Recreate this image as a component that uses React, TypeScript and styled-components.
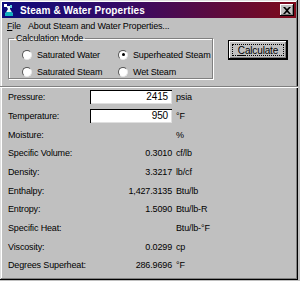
import { Fragment } from "react";
import styled, { createGlobalStyle } from "styled-components";

const GlobalStyle = createGlobalStyle`
  html, body {
    margin: 0;
    padding: 0;
    background: #c0c0c0;
  }
  body {
    font-family: "Liberation Sans", Arial, sans-serif;
    font-size: 9px;
    letter-spacing: -0.15px;
    color: #000;
  }
`;

const Window = styled.div`
  width: 298px;
  height: 280px;
  box-sizing: border-box;
  padding: 2px;
  background: #c0c0c0;
  box-shadow: inset -1px -1px #000, inset 1px 1px #dfdfdf,
    inset -2px -2px #808080, inset 2px 2px #fff;
  display: flex;
  flex-direction: column;
  white-space: nowrap;
`;

const TitleBar = styled.div`
  height: 16px;
  display: flex;
  align-items: center;
  gap: 5px;
  padding: 0 2px 0 1px;
  background: linear-gradient(to right, #0c0a7c, #3a0a62 45%, #7e0a1a);
  color: #fff;
  font-weight: bold;
  font-size: 10px;
  letter-spacing: 0.1px;
`;

const TitleText = styled.span`
  flex: 1;
`;

const CloseButton = styled.div`
  width: 14px;
  height: 12px;
  box-sizing: border-box;
  background: #c0c0c0;
  box-shadow: inset -1px -1px #000, inset 1px 1px #fff, inset -2px -2px #808080;
  display: flex;
  align-items: center;
  justify-content: center;
`;

const MenuBar = styled.div`
  height: 13px;
  display: flex;
  align-items: center;
  padding: 1px 0 0 5px;
  gap: 7px;
`;

const MenuItem = styled.span``;

const TopSection = styled.div`
  display: flex;
  align-items: flex-start;
  padding: 0 0 0 6px;
  height: 54px;
`;

const GroupBox = styled.fieldset`
  margin: 1px 0 0 0;
  padding: 0;
  width: 205px;
  height: 46px;
  box-sizing: border-box;
  border: 1px solid #808080;
  box-shadow: 1px 1px 0 #fff, inset 1px 1px 0 #fff;
`;

const GroupLegend = styled.legend`
  margin-left: 5px;
  padding: 0 2px;
  font-size: 9px;
`;

const RadioGrid = styled.div`
  display: grid;
  grid-template-columns: 96px 1fr;
  grid-auto-rows: 17px;
  padding: 3px 0 0 13px;
`;

const RadioOption = styled.label`
  display: flex;
  align-items: center;
  gap: 5px;
`;

const RadioCircle = styled.span<{ $checked?: boolean }>`
  width: 10px;
  height: 10px;
  box-sizing: border-box;
  border-radius: 50%;
  background: #fff;
  border: 1px solid;
  border-color: #555 #e8e8e8 #e8e8e8 #555;
  display: flex;
  align-items: center;
  justify-content: center;
  &::after {
    content: "";
    width: 3px;
    height: 3px;
    border-radius: 50%;
    background: ${(p) => (p.$checked ? "#000" : "transparent")};
  }
`;

const CalcButton = styled.div`
  margin: 8px 0 0 15px;
  width: 60px;
  height: 20px;
  box-sizing: border-box;
  border: 1px solid #000;
  background: #c0c0c0;
  box-shadow: inset -1px -1px #000, inset 1px 1px #fff, inset -2px -2px #808080;
  display: flex;
  padding: 3px;
`;

const FocusRect = styled.span`
  flex: 1;
  border: 1px dotted #000;
  display: flex;
  align-items: center;
  justify-content: center;
  font-size: 10px;
`;

const Separator = styled.div`
  height: 0;
  border-top: 1px solid #808080;
  border-bottom: 1px solid #fff;
  margin: 0 -2px;
`;

const Fields = styled.div`
  display: grid;
  grid-template-columns: 78px 82px auto;
  grid-auto-rows: 18.67px;
  column-gap: 4px;
  align-items: center;
  padding: 0 0 0 6px;
`;

const Label = styled.span``;

const Value = styled.span`
  text-align: right;
`;

const InputBox = styled.div`
  height: 14px;
  box-sizing: border-box;
  background: #fff;
  box-shadow: inset 1px 1px #000, inset -1px -1px #dfdfdf;
  text-align: right;
  padding-right: 4px;
  line-height: 14px;
  font-size: 10px;
`;

const Unit = styled.span``;

function AppIcon() {
  return (
    <svg width="12" height="14" viewBox="0 0 12 14">
      <rect x="1" y="1" width="3" height="3" fill="#fff" />
      <path d="M3 3 L7 3 L7 6 L10 11 L10 13 L2 13 L2 11 L5 6 Z" fill="#e8f8f8" />
      <path d="M3 9 L9 9 L10 11 L10 13 L2 13 L2 11 Z" fill="#10b0c0" />
      <rect x="7" y="2" width="2" height="3" fill="#60d0e0" />
    </svg>
  );
}

function CloseIcon() {
  return (
    <svg width="8" height="7" viewBox="0 0 8 7">
      <path d="M0 0 L2 0 L4 2 L6 0 L8 0 L5 3.5 L8 7 L6 7 L4 5 L2 7 L0 7 L3 3.5 Z" fill="#000" />
    </svg>
  );
}

interface IField {
  label: string;
  value: string;
  unit: string;
  input?: boolean;
}

const fields: IField[] = [
  { label: "Pressure:", value: "2415", unit: "psia", input: true },
  { label: "Temperature:", value: "950", unit: "°F", input: true },
  { label: "Moisture:", value: "", unit: "%" },
  { label: "Specific Volume:", value: "0.3010", unit: "cf/lb" },
  { label: "Density:", value: "3.3217", unit: "lb/cf" },
  { label: "Enthalpy:", value: "1,427.3135", unit: "Btu/lb" },
  { label: "Entropy:", value: "1.5090", unit: "Btu/lb-R" },
  { label: "Specific Heat:", value: "", unit: "Btu/lb-°F" },
  { label: "Viscosity:", value: "0.0299", unit: "cp" },
  { label: "Degrees Superheat:", value: "286.9696", unit: "°F" },
];

function App() {
  return (
    <>
      <GlobalStyle />
      <Window>
        <TitleBar>
          <AppIcon />
          <TitleText>Steam &amp; Water Properties</TitleText>
          <CloseButton>
            <CloseIcon />
          </CloseButton>
        </TitleBar>
        <MenuBar>
          <MenuItem>
            <u>F</u>ile
          </MenuItem>
          <MenuItem>About Steam and Water Properties...</MenuItem>
        </MenuBar>
        <TopSection>
          <GroupBox>
            <GroupLegend>Calculation Mode</GroupLegend>
            <RadioGrid>
              <RadioOption>
                <RadioCircle />
                Saturated Water
              </RadioOption>
              <RadioOption>
                <RadioCircle $checked />
                Superheated Steam
              </RadioOption>
              <RadioOption>
                <RadioCircle />
                Saturated Steam
              </RadioOption>
              <RadioOption>
                <RadioCircle />
                Wet Steam
              </RadioOption>
            </RadioGrid>
          </GroupBox>
          <CalcButton>
            <FocusRect>
              <span>
                <u>C</u>alculate
              </span>
            </FocusRect>
          </CalcButton>
        </TopSection>
        <Separator />
        <Fields>
          {fields.map((f) => (
            <Fragment key={f.label}>
              <Label>{f.label}</Label>
              {f.input ? <InputBox>{f.value}</InputBox> : <Value>{f.value}</Value>}
              <Unit>{f.unit}</Unit>
            </Fragment>
          ))}
        </Fields>
      </Window>
    </>
  );
}

export default App;
